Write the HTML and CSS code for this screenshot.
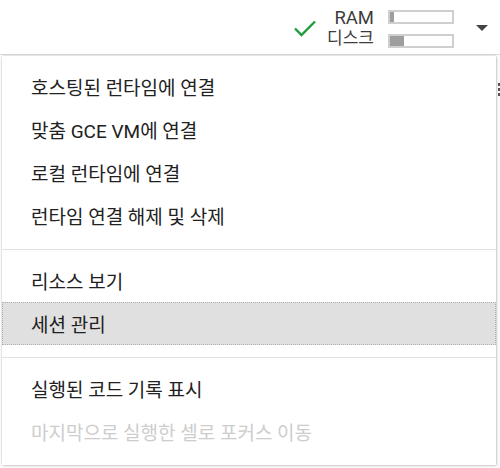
FILE: index.html
```html
<!DOCTYPE html>
<html lang="ko">
<head>
<meta charset="utf-8">
<link rel="stylesheet" href="styles.css">
</head>
<body>
<div class="page">
  <header class="toolbar">
    <div class="resources">
      <svg class="check" width="24" height="20" viewBox="0 0 24 20"><path d="M2 10.5 L8.5 17 L22 3.5" fill="none" stroke="#1e9e3a" stroke-width="2.4"/></svg>
      <div class="labels">
        <span>RAM</span>
        <span class="ko">디스크</span>
      </div>
      <div class="bars">
        <div class="bar"><div class="fill" style="width:4px"></div></div>
        <div class="bar"><div class="fill" style="width:14px"></div></div>
      </div>
    </div>
    <div class="caret"></div>
  </header>
  <div class="behind">
    <div class="dots"><i></i><i></i><i></i></div>
  </div>
  <div class="menu">
    <div class="item">호스팅된 런타임에 연결</div>
    <div class="item">맞춤 GCE VM에 연결</div>
    <div class="item">로컬 런타임에 연결</div>
    <div class="item">런타임 연결 해제 및 삭제</div>
    <div class="sep"></div>
    <div class="item">리소스 보기</div>
    <div class="item active">세션 관리</div>
    <div class="sep"></div>
    <div class="item">실행된 코드 기록 표시</div>
    <div class="item disabled">마지막으로 실행한 셀로 포커스 이동</div>
  </div>
</div>
</body>
</html>
```

FILE: styles.css
```css
html, body {
  margin: 0;
  padding: 0;
  background: #fff;
}
.page {
  position: relative;
  width: 500px;
  height: 468px;
  overflow: hidden;
  font-family: Roboto, "Noto Sans CJK KR", sans-serif;
  color: #212121;
}
.toolbar {
  height: 55px;
  border-bottom: 1px solid #dadada;
  display: flex;
  justify-content: flex-end;
  align-items: center;
  box-sizing: border-box;
}
.resources {
  display: flex;
  align-items: center;
}
.check {
  margin-right: 10px;
  margin-top: 2px;
}
.labels {
  display: flex;
  flex-direction: column;
  align-items: flex-end;
  font-size: 18.5px;
  line-height: 20px;
  color: #3c3c3c;
  margin-top: 2px;
}
.labels .ko {
  font-size: 17px;
}
.bars {
  display: flex;
  flex-direction: column;
  gap: 10px;
  margin-left: 14px;
  margin-top: 3px;
}
.bar {
  width: 62px;
  height: 10px;
  border: 2px solid #cfcfcf;
  background: #fff;
}
.fill {
  height: 100%;
  background: #9e9e9e;
}
.caret {
  width: 0;
  height: 0;
  border-left: 6px solid transparent;
  border-right: 6px solid transparent;
  border-top: 6px solid #444;
  margin: 2px 12px 0 22px;
}
.behind {
  position: absolute;
  left: 494px;
  top: 56px;
  width: 6px;
  height: 412px;
}
.dots {
  position: absolute;
  left: 4px;
  top: 27px;
  display: flex;
  flex-direction: column;
  gap: 2px;
}
.dots i {
  width: 3px;
  height: 3px;
  background: #555;
}
.menu {
  position: absolute;
  left: 2px;
  top: 56px;
  width: 494px;
  height: 409px;
  background: #fff;
  box-shadow: 0 0 2px rgba(0,0,0,0.25), 1px 1px 3px rgba(0,0,0,0.15);
  padding-top: 9px;
  box-sizing: border-box;
}
.item {
  height: 43px;
  display: flex;
  align-items: center;
  padding-left: 29px;
  font-size: 19px;
  color: #212121;
}
.item.active {
  background: #e0e0e0;
  outline: 1px dotted #b0b0b0;
  outline-offset: -1px;
}
.item.disabled {
  color: #cdcdcd;
}
.sep {
  height: 0;
  border-top: 1px solid #e2e2e2;
  margin: 12px 0 9px;
}
```
